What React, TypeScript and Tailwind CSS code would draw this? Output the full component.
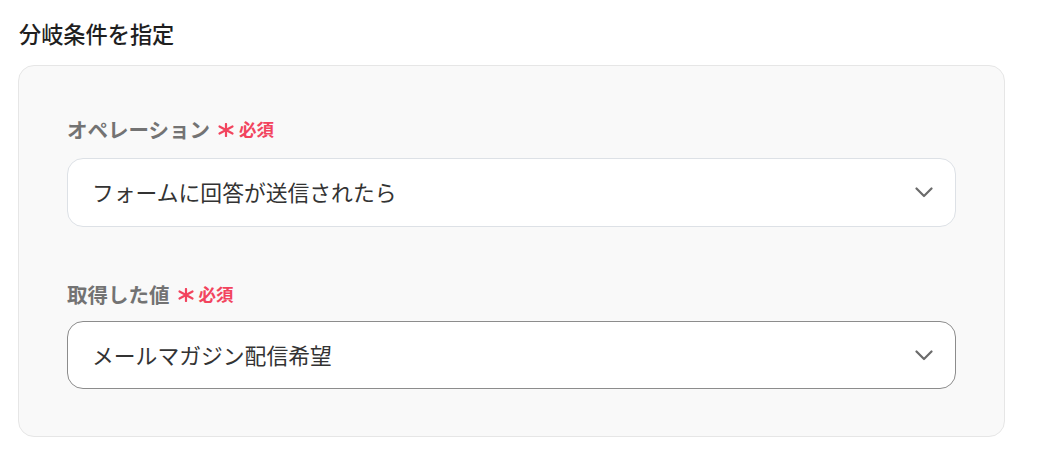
import React from 'react';

const Chevron: React.FC = () => (
  <svg width="18" height="11" viewBox="0 0 18 11" fill="none" className="shrink-0">
    <polyline points="1.5,1.5 9,9 16.5,1.5" stroke="#6b6b6b" strokeWidth="2.2" strokeLinecap="round" strokeLinejoin="round" />
  </svg>
);

// six-spoke asterisk used for the required mark
const Asterisk: React.FC = () => (
  <svg width="16" height="14" viewBox="0 0 16 14" fill="none" className="shrink-0">
    <g stroke="#f2445e" strokeWidth="2.2" strokeLinecap="round">
      <line x1="8" y1="1" x2="8" y2="13" />
      <line x1="1.5" y1="3.5" x2="14.5" y2="10.5" />
      <line x1="14.5" y1="3.5" x2="1.5" y2="10.5" />
    </g>
  </svg>
);

const Label: React.FC<{ text: string }> = ({ text }) => (
  <div className="flex items-center h-8">
    <span className="text-[20.5px] font-bold text-[#737373]">{text}</span>
    <span className="ml-[8px] mt-[2px]">
      <Asterisk />
    </span>
    <span className="ml-[5px] text-[17.5px] font-semibold text-[#f2445e]">必須</span>
  </div>
);

const Select: React.FC<{ value: string; active?: boolean }> = ({ value, active }) => (
  <div
    className={`flex items-center justify-between bg-white rounded-2xl pl-[24px] pr-[22px] ${
      active ? 'h-[68px] border border-[#8c8c8c]' : 'h-[69px] border border-[#dde1e6]'
    }`}
  >
    <span className="text-[21.8px] text-[#333333]">{value}</span>
    <Chevron />
  </div>
);

const App: React.FC = () => {
  return (
    <div
      className="min-h-screen bg-white pt-[18px] pl-[18px] w-[1044px]"
      style={{ fontFamily: '"Noto Sans CJK JP", "Noto Sans", sans-serif' }}
    >
      <h1 className="h-8 flex items-center pl-[1px] text-[22.2px] font-medium text-[#1f1f1f]">分岐条件を指定</h1>
      <div className="mt-[15px] w-[987px] rounded-2xl border border-[#e6e6e6] bg-[#f9f9f9] px-[48px] pt-[47px] pb-[47px]">
        <Label text="オペレーション" />
        <div className="mt-[13px]">
          <Select value="フォームに回答が送信されたら" />
        </div>
        <div className="mt-[51px]">
          <Label text="取得した値" />
        </div>
        <div className="mt-[11px]">
          <Select value="メールマガジン配信希望" active />
        </div>
      </div>
    </div>
  );
};

export default App;
